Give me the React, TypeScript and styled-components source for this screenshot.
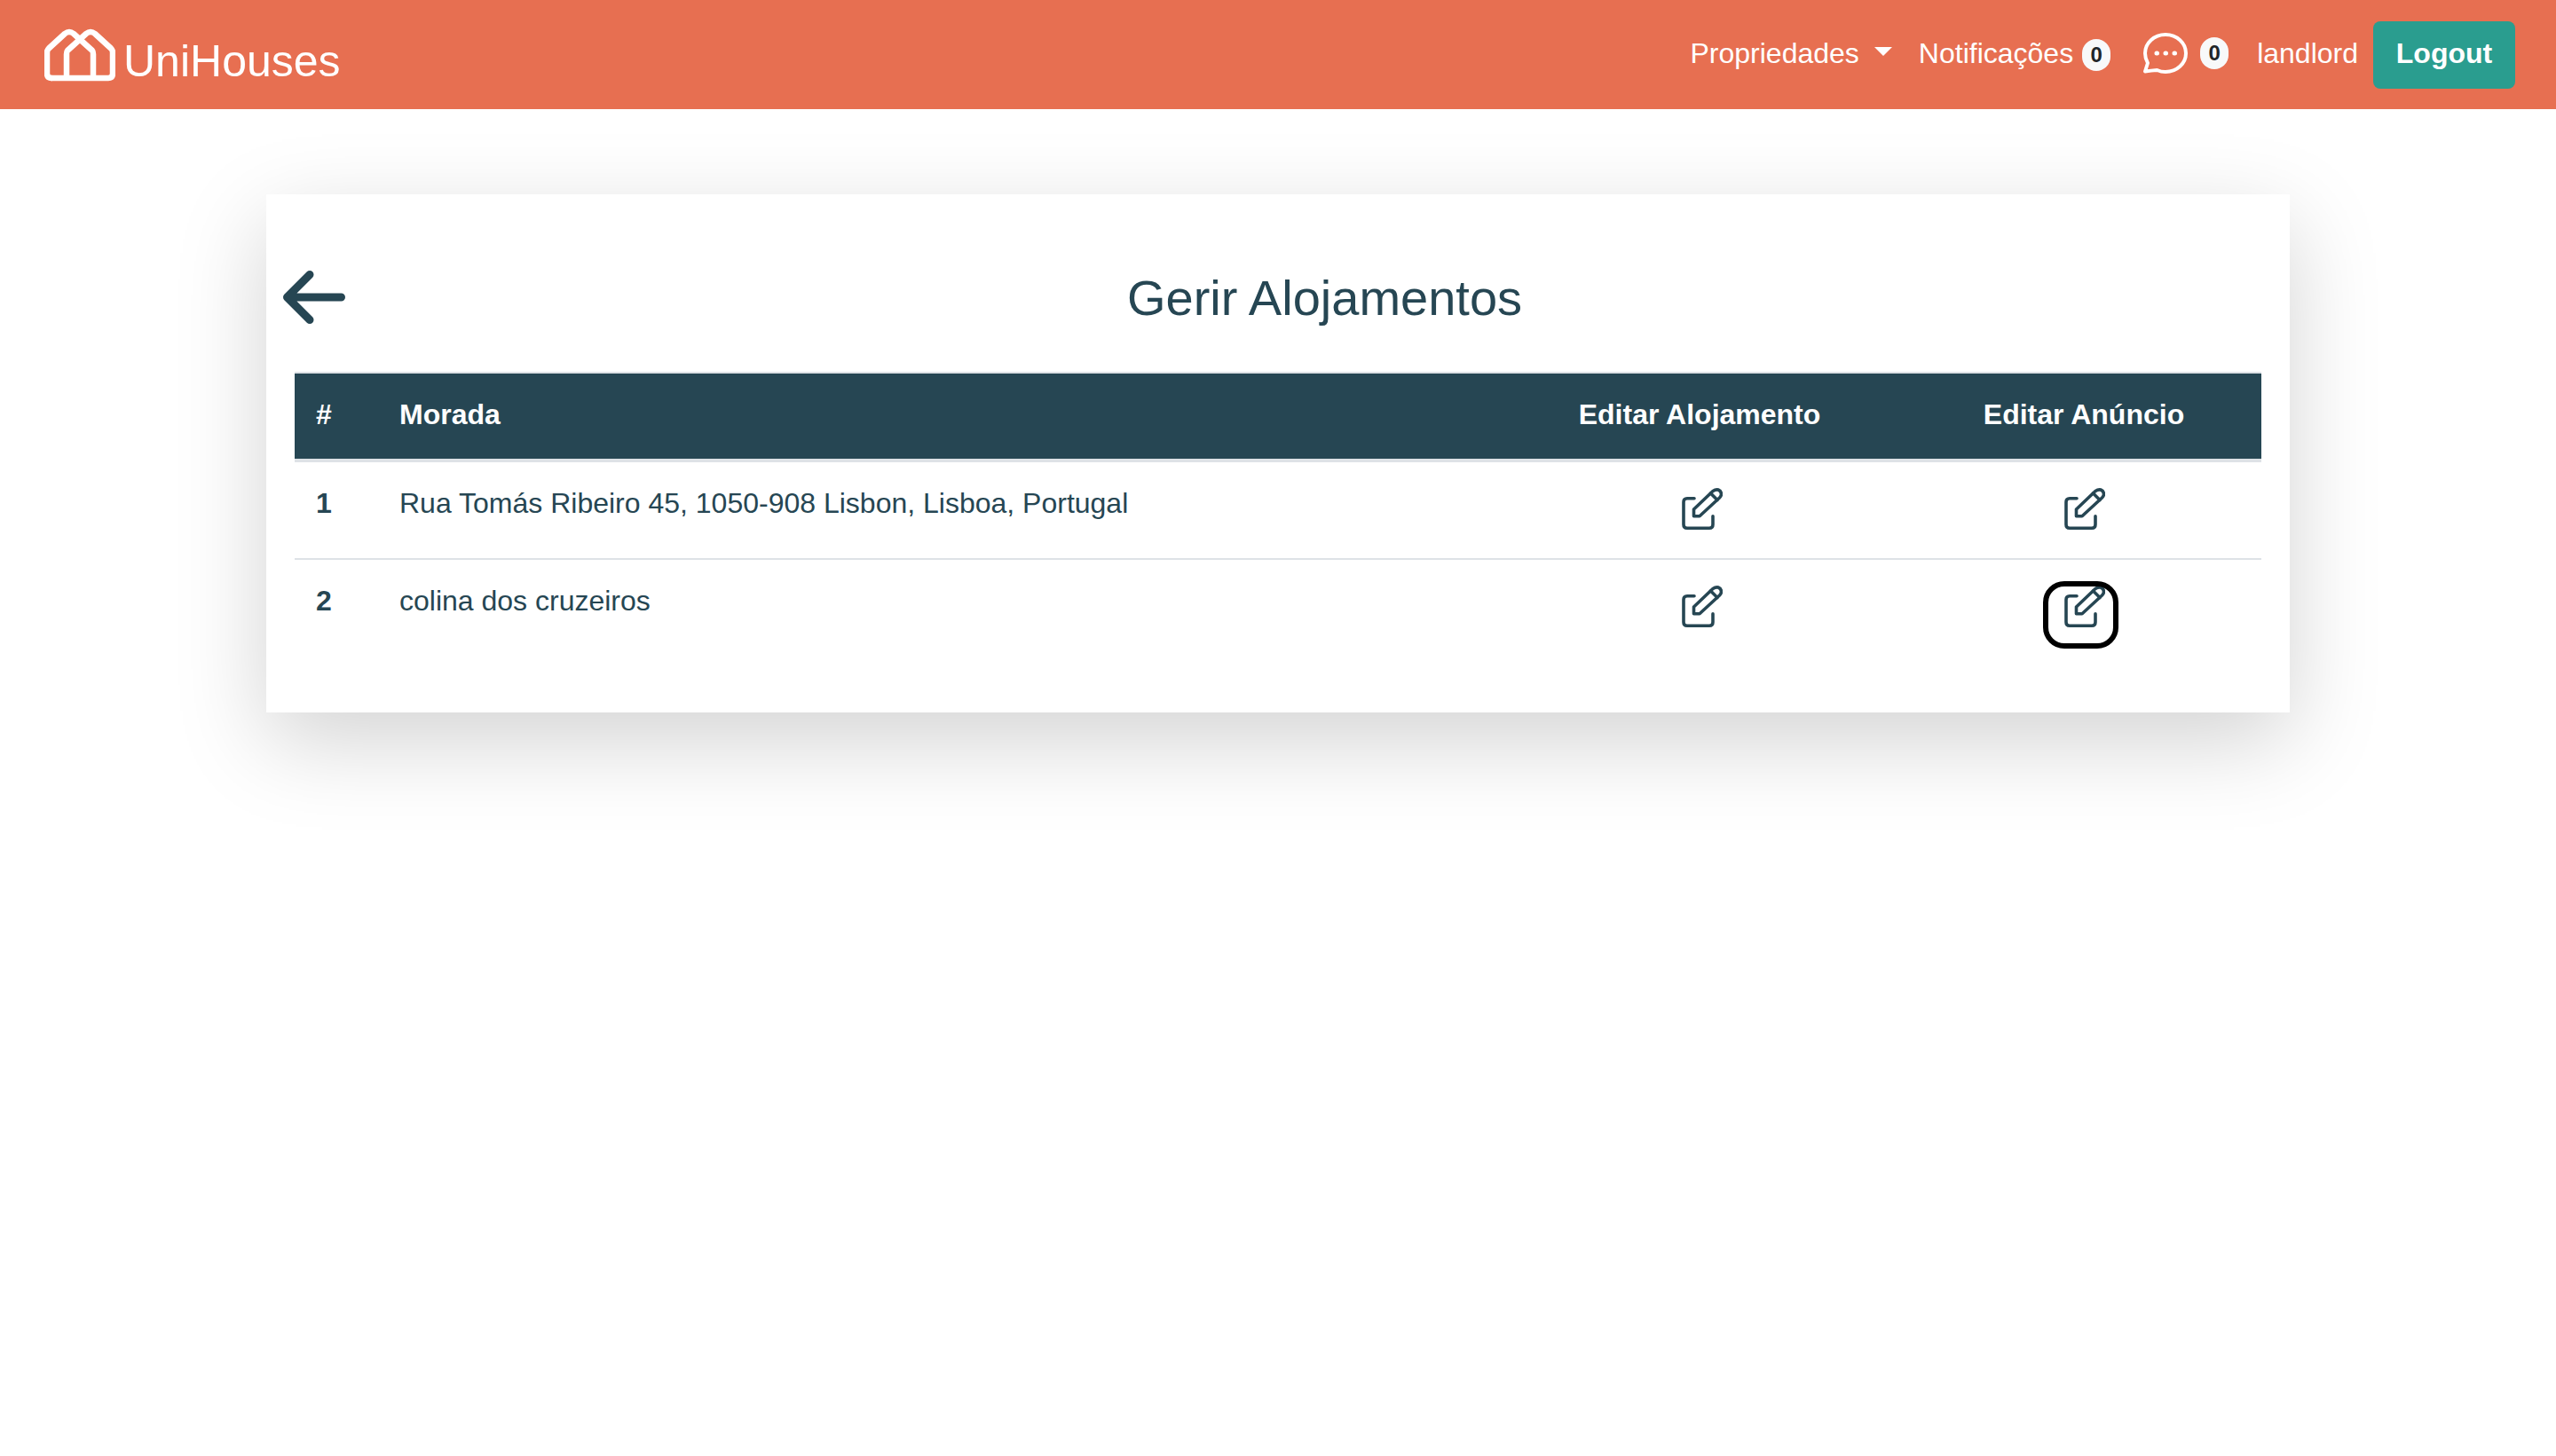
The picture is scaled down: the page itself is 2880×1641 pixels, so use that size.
import React from 'react';
import styled, { createGlobalStyle, css } from 'styled-components';

const Colors = {
    Coral: '#e76f51',
    Teal: '#2a9d8f',
    Ink: '#264653',
    Line: '#dee2e6',
    Badge: '#f8f9fa',
    BadgeText: '#212529',
};

const GlobalStyle = createGlobalStyle`
    html, body, #root {
        margin: 0;
        min-height: 100vh;
    }
    body {
        background: #fff;
        color: ${Colors.Ink};
        font-family: "Liberation Sans", Arial, sans-serif;
        font-size: 32px;
        line-height: 48px;
    }
`;

const Navbar = styled.nav`
    align-items: center;
    background: ${Colors.Coral};
    box-sizing: border-box;
    display: flex;
    height: 123px;
    justify-content: space-between;
    padding: 0 46px 0 50px;
`;

const Brand = styled.a`
    align-items: center;
    color: #fff;
    display: flex;
    gap: 9px;
`;

const BrandName = styled.span`
    font-size: 50px;
    line-height: 60px;
    padding-top: 14px;
`;

const NavItems = styled.div`
    align-items: center;
    color: #fff;
    display: flex;
`;

const NavLink = styled.span<{ $gap?: number }>`
    align-items: center;
    display: flex;
    margin-left: ${(p) => p.$gap ?? 0}px;
    padding-bottom: 3px;
`;

const Caret = styled.i`
    border-left: 10px solid transparent;
    border-right: 10px solid transparent;
    border-top: 10px solid #fff;
    margin: 0 0 4px 17px;
`;

const Badge = styled.span<{ $gap: number; $drop?: number }>`
    background: ${Colors.Badge};
    border-radius: 16px;
    color: ${Colors.BadgeText};
    font-size: 24px;
    font-weight: 700;
    line-height: 36px;
    margin-left: ${(p) => p.$gap}px;
    margin-top: ${(p) => p.$drop ?? 0}px;
    text-align: center;
    width: 32px;
`;

const LogoutButton = styled.button`
    background: ${Colors.Teal};
    border: none;
    border-radius: 8px;
    color: #fff;
    font: 700 32px/48px "Liberation Sans", Arial, sans-serif;
    height: 76px;
    margin-left: 17px;
    padding: 0 0 3px;
    width: 160px;
`;

const Page = styled.main`
    padding: 96px 300px 0;
`;

const Card = styled.section`
    background: #fff;
    box-shadow: 0 32px 96px rgba(0, 0, 0, 0.175);
    box-sizing: border-box;
    height: 584px;
    padding: 64px 32px 0;
`;

const TitleRow = styled.header`
    align-items: center;
    box-sizing: border-box;
    display: flex;
    height: 136px;
    padding-bottom: 32px;
`;

const BackLink = styled.a`
    display: flex;
    margin-left: -13px;
`;

const Title = styled.h3`
    flex: 1;
    font-size: 56px;
    font-weight: 400;
    line-height: 67px;
    margin: 0;
    padding-left: 48px;
    text-align: center;
`;

const Table = styled.table`
    border-collapse: collapse;
    table-layout: fixed;
    width: 100%;
`;

const HeadCell = styled.th<{ $width?: number; $center?: boolean }>`
    background: ${Colors.Ink};
    border-bottom: 4px solid ${Colors.Line};
    border-top: 2px solid ${Colors.Line};
    box-sizing: border-box;
    color: #fff;
    font-weight: 700;
    padding: 22px 24px 26px;
    text-align: ${(p) => (p.$center ? 'center' : 'left')};
    width: ${(p) => (p.$width ? `${p.$width}px` : 'auto')};
`;

const Cell = styled.td<{ $center?: boolean; $bold?: boolean }>`
    border-top: 2px solid ${Colors.Line};
    font-weight: ${(p) => (p.$bold ? 700 : 400)};
    padding: 22px 24px 26px;
    text-align: ${(p) => (p.$center ? 'center' : 'left')};
    vertical-align: top;
`;

const FirstRowCell = styled(Cell)`
    border-top: none;
`;

const IconCell = styled.div<{ $shift: number }>`
    display: flex;
    justify-content: center;
    padding: 2px 0 0 ${(p) => p.$shift}px;
`;

const EditLink = styled.a<{ $focused?: boolean }>`
    box-sizing: border-box;
    display: block;
    height: 58px;
    line-height: 0;
    padding-top: 5px;
    position: relative;

    ${(p) =>
        p.$focused &&
        css`
            &::after {
                border: 6px solid #000;
                border-radius: 24px;
                box-sizing: border-box;
                content: '';
                height: 76px;
                left: -24px;
                position: absolute;
                top: 0;
                width: 85px;
            }
        `}
`;

const LogoIcon = () => (
    <svg width="80" height="60" viewBox="0 0 80 60" fill="none" stroke="#fff" strokeWidth="6.500" strokeLinecap="round" strokeLinejoin="round">
        <path d="M8 56H72Q77 56 77 51V27Q77 24.500 75 22.500L57 6Q52 2 47 6L26 25Q25 26 25 29V55" />
        <path d="M55 55V29Q55 26 54 25L33 6Q28 2 23 6L5 22.500Q3 24.500 3 27V51Q3 56 8 56" />
    </svg>
);

const ChatIcon = () => (
    <svg width="50" height="46" viewBox="0 0 50 46" fill="none" stroke="#fff" strokeWidth="4" strokeLinecap="round" strokeLinejoin="round">
        <path d="M2 43.500L5 34C3 30.500 2 27 2 23 2 11.500 12 2 25 2s23 9.500 23 21-10 21-23 21c-3.500 0-6.500-.7-9.500-2Q9 42.500 2 43.500Z" />
        <path d="M15 23h.5M25 23h.5M35 23h.5" strokeWidth="5" />
    </svg>
);

const BackIcon = () => (
    <svg width="70" height="60" viewBox="0 0 70 60" fill="none" stroke={Colors.Ink} strokeWidth="9" strokeLinecap="round" strokeLinejoin="round">
        <path d="M4.500 30H65.500M30 4.500L4.500 30L30 55.500" />
    </svg>
);

const EditIcon = () => (
    <svg width="46" height="47" viewBox="0 0 46 47" fill="none" stroke={Colors.Ink} strokeWidth="3.600" strokeLinecap="round" strokeLinejoin="round">
        <path d="M14 11.700H6Q2 11.700 2 15.700V41.200Q2 45.200 6 45.200H31Q35 45.200 35 41.200V31.700" />
        <path d="M13.500 24L35 3.500Q38 1.500 41 2Q44.500 3.500 44.500 7Q44.500 9 42.500 11L20 31.700H13.500Z" />
        <path d="M32.500 6L40 13.500" />
    </svg>
);

const rows = [
    { id: 1, address: 'Rua Tomás Ribeiro 45, 1050-908 Lisbon, Lisboa, Portugal' },
    { id: 2, address: 'colina dos cruzeiros' },
];

export default function App() {
    return (
        <>
            <GlobalStyle />
            <Navbar>
                <Brand>
                    <LogoIcon />
                    <BrandName>UniHouses</BrandName>
                </Brand>
                <NavItems>
                    <NavLink>
                        Propriedades
                        <Caret />
                    </NavLink>
                    <NavLink $gap={30}>
                        Notificações
                        <Badge $gap={10} $drop={4}>0</Badge>
                    </NavLink>
                    <NavLink $gap={37}>
                        <ChatIcon />
                        <Badge $gap={14}>0</Badge>
                    </NavLink>
                    <NavLink $gap={32}>landlord</NavLink>
                    <LogoutButton>Logout</LogoutButton>
                </NavItems>
            </Navbar>
            <Page>
                <Card>
                    <TitleRow>
                        <BackLink>
                            <BackIcon />
                        </BackLink>
                        <Title>Gerir Alojamentos</Title>
                    </TitleRow>
                    <Table>
                        <thead>
                            <tr>
                                <HeadCell $width={94}>#</HeadCell>
                                <HeadCell>Morada</HeadCell>
                                <HeadCell $width={466} $center>
                                    Editar Alojamento
                                </HeadCell>
                                <HeadCell $width={400} $center>
                                    Editar Anúncio
                                </HeadCell>
                            </tr>
                        </thead>
                        <tbody>
                            {rows.map((row, i) => {
                                const RowCell = i === 0 ? FirstRowCell : Cell;
                                return (
                                    <tr key={row.id}>
                                        <RowCell $bold>{row.id}</RowCell>
                                        <RowCell>{row.address}</RowCell>
                                        <RowCell>
                                            <IconCell $shift={5}>
                                                <EditLink>
                                                    <EditIcon />
                                                </EditLink>
                                            </IconCell>
                                        </RowCell>
                                        <RowCell>
                                            <IconCell $shift={2}>
                                                <EditLink $focused={i === 1}>
                                                    <EditIcon />
                                                </EditLink>
                                            </IconCell>
                                        </RowCell>
                                    </tr>
                                );
                            })}
                        </tbody>
                    </Table>
                </Card>
            </Page>
        </>
    );
}
